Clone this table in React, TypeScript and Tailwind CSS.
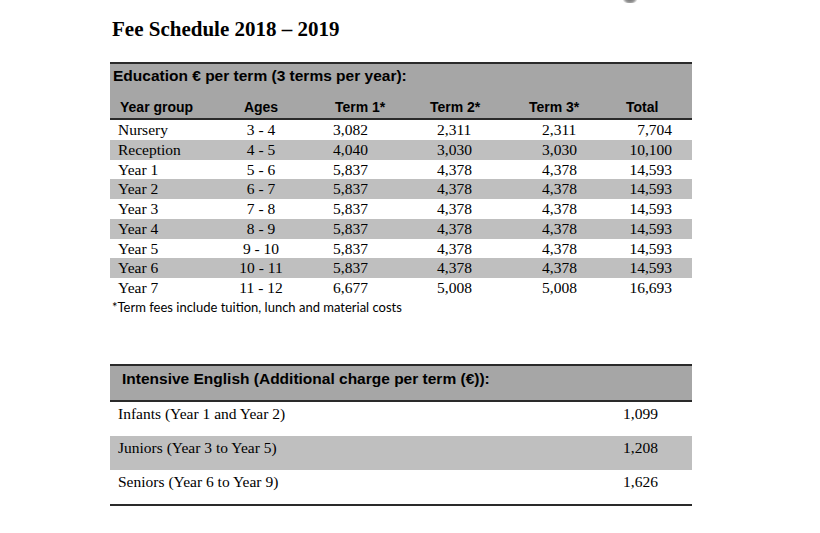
const rows = [
  ["Nursery", "3 - 4", "3,082", "2,311", "2,311", "7,704"],
  ["Reception", "4 - 5", "4,040", "3,030", "3,030", "10,100"],
  ["Year 1", "5 - 6", "5,837", "4,378", "4,378", "14,593"],
  ["Year 2", "6 - 7", "5,837", "4,378", "4,378", "14,593"],
  ["Year 3", "7 - 8", "5,837", "4,378", "4,378", "14,593"],
  ["Year 4", "8 - 9", "5,837", "4,378", "4,378", "14,593"],
  ["Year 5", "9 - 10", "5,837", "4,378", "4,378", "14,593"],
  ["Year 6", "10 - 11", "5,837", "4,378", "4,378", "14,593"],
  ["Year 7", "11 - 12", "6,677", "5,008", "5,008", "16,693"],
];

const english = [
  ["Infants (Year 1 and Year 2)", "1,099"],
  ["Juniors (Year 3 to Year 5)", "1,208"],
  ["Seniors (Year 6 to Year 9)", "1,626"],
];

const sans = "font-['Liberation_Sans',Arial,sans-serif]";
const serif = "font-['Liberation_Serif','Times_New_Roman',serif]";

export default function App() {
  return (
    <div className="relative w-[820px] h-[533px] bg-white text-black overflow-hidden">
      {/* leftover blob from the page above */}
      <div className="absolute left-[621px] top-[-9px] w-[18px] h-[12px] rounded-full bg-[radial-gradient(circle,#555_0%,#999_50%,transparent_75%)]" />

      <div className="pl-[110px] pt-[16px]">
        <h1 className={`${serif} font-bold text-[21px] leading-[26px] pl-[2px]`}>
          Fee Schedule 2018 – 2019
        </h1>

        {/* Education table */}
        <div className="w-[582px] mt-[20px]">
          <div className="bg-[#a6a6a6] border-t-2 border-b-2 border-[#2a2a2a] h-[58px] flex flex-col justify-between">
            <div className={`${sans} font-bold text-[15.5px] leading-[17px] pl-[3px] pt-[3px]`}>
              Education € per term (3 terms per year):
            </div>
            <div className={`${sans} font-bold text-[14px] leading-[16px] flex pb-[3px]`}>
              <div className="w-[120px] pl-[10px]">Year group</div>
              <div className="w-[62px] text-center">Ages</div>
              <div className="w-[108px] pl-[43px]">Term 1*</div>
              <div className="w-[110px] pl-[30px]">Term 2*</div>
              <div className="w-[92px] pl-[19px]">Term 3*</div>
              <div className="w-[90px] pl-[24px]">Total</div>
            </div>
          </div>
          {rows.map((r, i) => (
            <div
              key={r[0]}
              className={`${serif} flex text-[15.5px] leading-[19.75px] h-[19.75px] ${i % 2 === 1 ? "bg-[#bfbfbf]" : "bg-white"}`}
            >
              <div className="w-[120px] pl-[8px]">{r[0]}</div>
              <div className="w-[62px] text-center">{r[1]}</div>
              <div className="w-[108px] pl-[41px]">{r[2]}</div>
              <div className="w-[110px] pl-[37px]">{r[3]}</div>
              <div className="w-[92px] pl-[32px]">{r[4]}</div>
              <div className="w-[90px] text-right pr-[20px]">{r[5]}</div>
            </div>
          ))}
          <p className={`font-['Lato','Noto_Sans',sans-serif] text-[13px] leading-[16px] mt-[1px] pl-[2px]`}>
            *Term fees include tuition, lunch and material costs
          </p>
        </div>

        {/* Intensive English table */}
        <div className="w-[582px] mt-[49px] border-b-2 border-[#2a2a2a]">
          <div className="bg-[#a6a6a6] border-t-2 border-b-2 border-[#2a2a2a] h-[38px]">
            <div className={`${sans} font-bold text-[15.5px] leading-[17px] pl-[12px] pt-[4px]`}>
              Intensive English (Additional charge per term (€)):
            </div>
          </div>
          {english.map((r, i) => (
            <div
              key={r[0]}
              className={`${serif} flex text-[15.5px] leading-[18px] h-[34px] pt-[3px] ${i % 2 === 1 ? "bg-[#bfbfbf]" : "bg-white"}`}
            >
              <div className="w-[513px] pl-[8px]">{r[0]}</div>
              <div>{r[1]}</div>
            </div>
          ))}
        </div>
      </div>
    </div>
  );
}
